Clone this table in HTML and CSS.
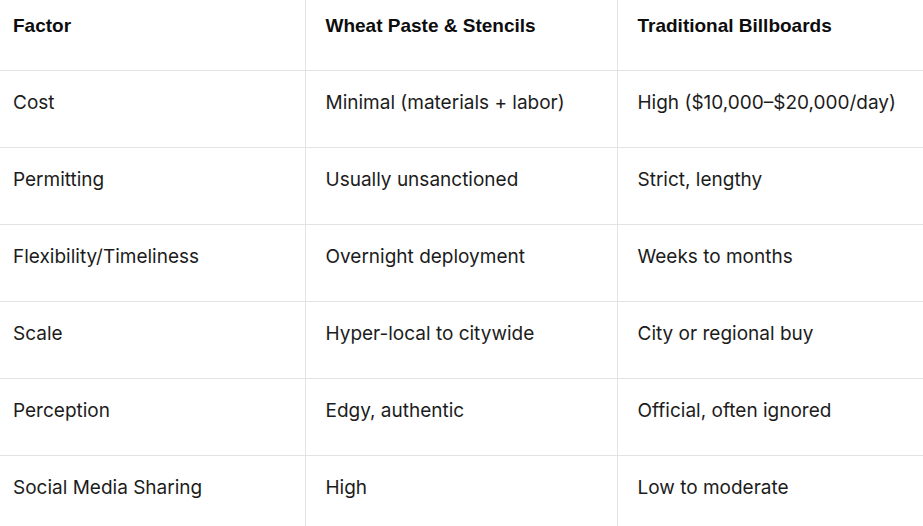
FILE: index.html
```html
<!DOCTYPE html>
<html>
<head>
<meta charset="utf-8">
<link rel="stylesheet" href="styles.css">
</head>
<body>
<table class="cmp">
  <thead>
    <tr><th>Factor</th><th>Wheat Paste &amp; Stencils</th><th>Traditional Billboards</th></tr>
  </thead>
  <tbody>
    <tr><td>Cost</td><td>Minimal (materials + labor)</td><td>High ($10,000–$20,000/day)</td></tr>
    <tr><td>Permitting</td><td>Usually unsanctioned</td><td>Strict, lengthy</td></tr>
    <tr><td>Flexibility/Timeliness</td><td>Overnight deployment</td><td>Weeks to months</td></tr>
    <tr><td>Scale</td><td>Hyper-local to citywide</td><td>City or regional buy</td></tr>
    <tr><td>Perception</td><td>Edgy, authentic</td><td>Official, often ignored</td></tr>
    <tr><td>Social Media Sharing</td><td>High</td><td>Low to moderate</td></tr>
  </tbody>
</table>
</body>
</html>
```
FILE: styles.css
```css
html, body { margin: 0; padding: 0; background: #fff; }
body { overflow: hidden; }
.cmp {
  border-collapse: collapse;
  table-layout: fixed;
  width: 930px;
  font-family: Inter, "Liberation Sans", sans-serif;
  font-size: 19px;
  color: #1c1c1c;
}
.cmp th, .cmp td {
  box-sizing: border-box;
  text-align: left;
  vertical-align: top;
  line-height: 22px;
  padding: 21px 20px 33px 20px;
  border-bottom: 1px solid #e3e3e3;
  border-right: 1px solid #e3e3e3;
}
.cmp th {
  font-family: "Liberation Sans", Arial, sans-serif;
  font-weight: 700;
  font-size: 19px;
  color: #0d0d0d;
  padding-top: 15px;
  padding-bottom: 33px;
  height: 70px;
}
.cmp td { height: 77px; }
.cmp tbody tr:nth-child(4) td { height: 76px; }
.cmp th:nth-child(1), .cmp td:nth-child(1) { width: 305px; padding-left: 13px; }
.cmp th:nth-child(2), .cmp td:nth-child(2) { width: 312px; }
.cmp th:nth-child(3), .cmp td:nth-child(3) { border-right: none; }
```
